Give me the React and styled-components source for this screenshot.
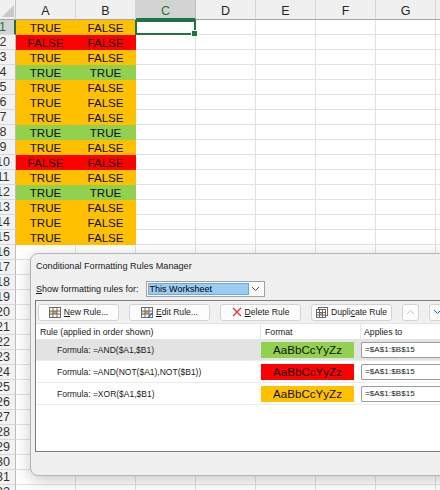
import React from "react";
import styled, { createGlobalStyle } from "styled-components";

const GlobalStyle = createGlobalStyle`
  html, body { margin: 0; padding: 0; background: #fff; overflow: hidden; }
  body { font-family: "Liberation Sans", Arial, sans-serif; }
`;

const GREEN = "#217346";
const FILLS = { O: "#FFC000", R: "#FF0000", G: "#92D050" };

const Page = styled.div`
  position: relative;
  width: 440px;
  height: 490px;
  overflow: hidden;
  background: #fff;
`;

const Sheet = styled.div`
  display: grid;
  grid-template-columns: 16px repeat(8, 60px);
  grid-template-rows: 20px;
  grid-auto-rows: 15px;
`;

const Corner = styled.div`
  box-sizing: border-box;
  background: #f0f0f0;
  border-right: 1px solid #c6c6c6;
  border-bottom: 1px solid #a3a3a3;
  display: flex;
  align-items: flex-end;
  justify-content: flex-end;
  padding: 0 1px 2px 0;
`;

const ColHeader = styled.div`
  box-sizing: border-box;
  background: ${(p) => (p.$selected ? "#d3d3d3" : "#f0f0f0")};
  color: ${(p) => (p.$selected ? GREEN : "#262626")};
  border-right: 1px solid ${(p) => (p.$selected ? "#bdbdbd" : "#d4d4d4")};
  border-bottom: ${(p) => (p.$selected ? `2px solid ${GREEN}` : "1px solid #a3a3a3")};
  display: flex;
  align-items: center;
  justify-content: center;
  padding-top: 3px;
  font-size: 12.5px;
`;

const RowHeader = styled.div`
  box-sizing: border-box;
  background: ${(p) => (p.$selected ? "#d3d3d3" : "#f2f2f2")};
  color: ${(p) => (p.$selected ? GREEN : "#333")};
  border-right: ${(p) => (p.$selected ? `2px solid ${GREEN}` : "1px solid #bdbdbd")};
  border-bottom: 1px solid #d8d8d8;
  display: flex;
  align-items: center;
  justify-content: center;
  padding-right: 9px;
  font-size: 12.5px;
  white-space: nowrap;
`;

const Cell = styled.div`
  position: relative;
  box-sizing: border-box;
  background: ${(p) => p.$fill || "#fff"};
  border-right: 1px solid ${(p) => p.$fill || "#e1e1e1"};
  border-bottom: 1px solid ${(p) => p.$fill || "#e1e1e1"};
  display: flex;
  align-items: center;
  justify-content: center;
  font-size: 11.6px;
  color: #111;
  ${(p) =>
    p.$active &&
    `
    &::after {
      content: "";
      position: absolute;
      left: -1px; top: 0; right: -1px; bottom: -1px;
      border: 2px solid ${GREEN};
    }
    &::before {
      content: "";
      position: absolute;
      right: -3px; bottom: -3px;
      width: 5px; height: 5px;
      background: ${GREEN};
      border: 1px solid #fff;
      z-index: 1;
    }
  `}
`;

/* ---------- dialog ---------- */

const Dialog = styled.div`
  position: absolute;
  left: 30px;
  top: 253px;
  width: 430px;
  height: 223px;
  box-sizing: border-box;
  background: #f0f0f0;
  border: 1px solid #b4b4b4;
  border-radius: 8px;
  box-shadow: 0 4px 16px rgba(0, 0, 0, 0.22);
  padding: 6px 0 0 4px;
  display: flex;
  flex-direction: column;
  color: #1a1a1a;
`;

const Title = styled.div`
  font-size: 9.1px;
  line-height: 12px;
  margin-left: 1px;
`;

const FilterRow = styled.div`
  display: flex;
  align-items: center;
  gap: 7px;
  margin: 9px 0 0 1px;
  height: 16px;
`;

const Label = styled.span`
  font-size: 9px;
  u { text-decoration: underline; }
`;

const Select = styled.div`
  box-sizing: border-box;
  width: 119px;
  height: 16px;
  background: #fff;
  border: 1px solid #a0a0a0;
  display: flex;
  align-items: stretch;
  padding: 1px;
`;

const SelectValue = styled.div`
  flex: 1;
  background: #9ccbf2;
  border: 1px solid #6aa8e0;
  font-size: 9px;
  display: flex;
  align-items: center;
  padding-left: 1px;
  color: #000;
`;

const SelectArrow = styled.div`
  width: 14px;
  display: flex;
  align-items: center;
  justify-content: center;
`;

const Group = styled.div`
  margin-top: 3px;
  flex: 0 0 152px;
  box-sizing: border-box;
  border: 1px solid #7d7d7d;
  border-right: none;
  background: #fff;
  display: flex;
  flex-direction: column;
`;

const Toolbar = styled.div`
  display: flex;
  align-items: center;
  gap: 10px;
  height: 22px;
  padding: 0 0 0 2px;
  background: #f0f0f0;
  border-bottom: 1px solid #e4e4e4;
  flex: none;
`;

const ToolButton = styled.div`
  box-sizing: border-box;
  width: ${(p) => (p.$small ? "17px" : "81px")};
  height: 17px;
  background: #fdfdfd;
  border: 1px solid #d3d3d3;
  border-radius: 3px;
  display: flex;
  align-items: center;
  justify-content: center;
  gap: 3px;
  font-size: 8.6px;
  color: #1a1a1a;
  flex: none;
  u { text-decoration: underline; }
`;

const ListGrid = styled.div`
  display: grid;
  grid-template-columns: 224px 100px 1fr;
`;

const HeadCell = styled.div`
  height: 15px;
  display: flex;
  align-items: center;
  padding-left: ${(p) => p.$pad || 4}px;
  font-size: 8.7px;
  border-left: ${(p) => (p.$divider ? "1px solid #e5e5e5" : "none")};
  white-space: nowrap;
`;

const RuleRow = styled.div`
  display: contents;
`;

const RowCell = styled.div`
  height: 22px;
  box-sizing: border-box;
  background: ${(p) => (p.$selected ? "#e3e3e3" : "#fff")};
  border-bottom: 1px solid #ececec;
  display: flex;
  align-items: center;
  padding-left: ${(p) => p.$pad || 0}px;
  font-size: 8.5px;
  white-space: nowrap;
  overflow: hidden;
`;

const Swatch = styled.div`
  width: 93px;
  height: 16px;
  margin-left: 1px;
  background: ${(p) => p.$fill};
  display: flex;
  align-items: center;
  justify-content: center;
  font-size: 11.6px;
  color: #111;
`;

const AppliesBox = styled.div`
  flex: 1;
  height: 16px;
  margin-left: 1px;
  box-sizing: border-box;
  border: 1px solid #9c9c9c;
  border-right: none;
  border-radius: 2px 0 0 2px;
  background: #fff;
  display: flex;
  align-items: center;
  padding-left: 3px;
  font-size: 8px;
  letter-spacing: 0.1px;
`;

/* ---------- icons ---------- */

const TableIcon = ({ edit }) => (
  <svg width="12" height="11" viewBox="0 0 12 11">
    <rect x="0.5" y="0.5" width="11" height="10" fill="#fff" stroke="#6a6a6a" />
    <rect x="4" y="4" width="4" height="3" fill="#f4a43a" />
    <rect x="1" y="4" width="3" height="3" fill="#fbd59a" />
    <path d="M0.5 4h11M0.5 7h11M4 0.5v10M8 0.5v10" stroke="#6a6a6a" strokeWidth="1" />
    {edit && (
      <g>
        <path d="M6 10.5 L11 5.5 L12 6.5 L7 11.5 Z" fill="#2b79d0" />
        <path d="M5.5 11 L6 10.5 L7 11.5 Z" fill="#f0a030" />
      </g>
    )}
  </svg>
);

const DupIcon = () => (
  <svg width="12" height="11" viewBox="0 0 12 11">
    <rect x="2.5" y="0.5" width="9" height="8" fill="#fff" stroke="#6a6a6a" />
    <rect x="0.5" y="2.5" width="9" height="8" fill="#fff" stroke="#6a6a6a" />
    <rect x="3.5" y="5.5" width="3" height="2.5" fill="#f4a43a" />
    <path d="M0.5 5.5h9M0.5 8h9M3.5 2.5v8M6.5 2.5v8" stroke="#6a6a6a" />
  </svg>
);

const XIcon = () => (
  <svg width="10" height="10" viewBox="0 0 10 10">
    <path d="M1 1 L9 9 M9 1 L1 9" stroke="#e0282e" strokeWidth="1.1" />
  </svg>
);

const Chevron = ({ up, color }) => (
  <svg width="9" height="6" viewBox="0 0 9 6">
    <path d={up ? "M1 5 L4.5 1.5 L8 5" : "M1 1 L4.5 4.5 L8 1"} fill="none" stroke={color} strokeWidth="1" />
  </svg>
);

const CornerTri = () => (
  <svg width="12" height="12" viewBox="0 0 12 12">
    <polygon points="12,0 12,12 0,12" fill="#c9c9c9" />
  </svg>
);

/* ---------- data ---------- */

const A = ["TRUE","FALSE","TRUE","TRUE","TRUE","TRUE","TRUE","TRUE","TRUE","FALSE","TRUE","TRUE","TRUE","TRUE","TRUE"];
const B = ["FALSE","FALSE","FALSE","TRUE","FALSE","FALSE","FALSE","TRUE","FALSE","FALSE","FALSE","TRUE","FALSE","FALSE","FALSE"];
const fillFor = (a, b) => (a === "TRUE" && b === "TRUE" ? FILLS.G : a === "FALSE" && b === "FALSE" ? FILLS.R : FILLS.O);

const COLS = ["A", "B", "C", "D", "E", "F", "G", "H"];
const ROWS = 32;

const RULES = [
  { formula: "Formula: =AND($A1,$B1)", fill: FILLS.G, selected: true },
  { formula: "Formula: =AND(NOT($A1),NOT($B1))", fill: FILLS.R },
  { formula: "Formula: =XOR($A1,$B1)", fill: FILLS.O },
];

export default function App() {
  const cells = [];
  cells.push(
    <Corner key="corner">
      <CornerTri />
    </Corner>
  );
  COLS.forEach((c) => cells.push(<ColHeader key={"h" + c} $selected={c === "C"}>{c}</ColHeader>));
  for (let r = 1; r <= ROWS; r++) {
    cells.push(
      <RowHeader key={"r" + r} $selected={r === 1}>
        <span>{r}</span>
      </RowHeader>
    );
    COLS.forEach((c, ci) => {
      let text = "";
      let fill;
      if (r <= 15 && ci < 2) {
        const a = A[r - 1];
        const b = B[r - 1];
        text = ci === 0 ? a : b;
        fill = fillFor(a, b);
      }
      cells.push(
        <Cell key={c + r} $fill={fill} $active={r === 1 && c === "C"}>
          {text}
        </Cell>
      );
    });
  }

  return (
    <Page>
      <GlobalStyle />
      <Sheet>{cells}</Sheet>
      <Dialog>
        <Title>Conditional Formatting Rules Manager</Title>
        <FilterRow>
          <Label>
            <u>S</u>how formatting rules for:
          </Label>
          <Select>
            <SelectValue>This Worksheet</SelectValue>
            <SelectArrow>
              <Chevron color="#555" />
            </SelectArrow>
          </Select>
        </FilterRow>
        <Group>
          <Toolbar>
            <ToolButton>
              <TableIcon />
              <span><u>N</u>ew Rule...</span>
            </ToolButton>
            <ToolButton>
              <TableIcon edit />
              <span><u>E</u>dit Rule...</span>
            </ToolButton>
            <ToolButton>
              <XIcon />
              <span><u>D</u>elete Rule</span>
            </ToolButton>
            <ToolButton>
              <DupIcon />
              <span>Dupli<u>c</u>ate Rule</span>
            </ToolButton>
            <ToolButton $small>
              <Chevron up color="#c4c4c4" />
            </ToolButton>
            <ToolButton $small>
              <Chevron color="#0a64c2" />
            </ToolButton>
          </Toolbar>
          <ListGrid>
            <HeadCell $pad={4}>Rule (applied in order shown)</HeadCell>
            <HeadCell $divider $pad={4}>Format</HeadCell>
            <HeadCell $divider $pad={3}>Applies to</HeadCell>
            {RULES.map((rule, i) => (
              <RuleRow key={i}>
                <RowCell $selected={rule.selected} $pad={21}>{rule.formula}</RowCell>
                <RowCell $selected={rule.selected}>
                  <Swatch $fill={rule.fill}>AaBbCcYyZz</Swatch>
                </RowCell>
                <RowCell $selected={rule.selected}>
                  <AppliesBox>=$A$1:$B$15</AppliesBox>
                </RowCell>
              </RuleRow>
            ))}
          </ListGrid>
        </Group>
      </Dialog>
    </Page>
  );
}
